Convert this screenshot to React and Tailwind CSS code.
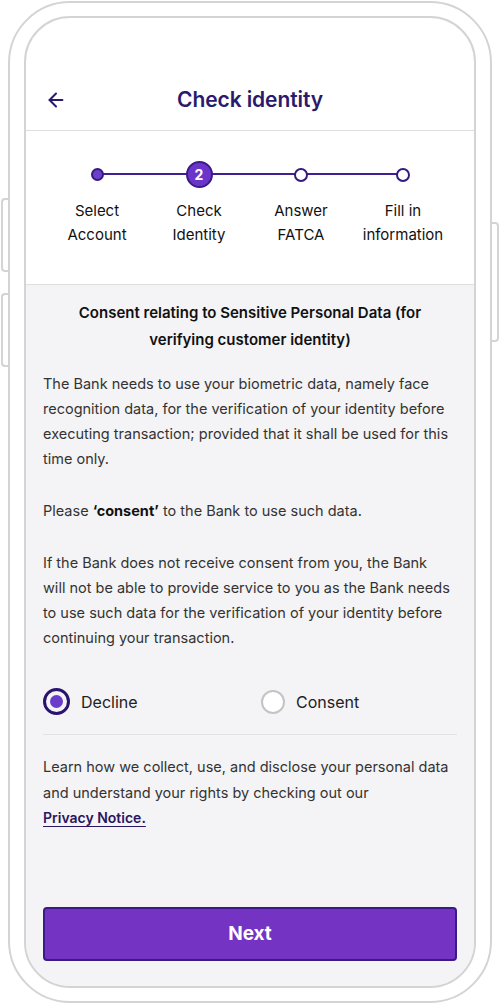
import { ArrowLeft } from 'lucide-react'

const STEPS = [
  { label: ['Select', 'Account'], state: 'done' },
  { label: ['Check', 'Identity'], state: 'current' },
  { label: ['Answer', 'FATCA'], state: 'todo' },
  { label: ['Fill in', 'information'], state: 'todo' },
]

function StepDot({ state }) {
  if (state === 'current') {
    return (
      <div className="w-[27px] h-[27px] rounded-full bg-[#6b35c9] border-2 border-[#3b1a8a] flex items-center justify-center text-white text-[14px] font-bold leading-none">
        2
      </div>
    )
  }
  if (state === 'done') {
    return <div className="w-[13px] h-[13px] rounded-full bg-[#6b3fcb] border-2 border-[#35197f]" />
  }
  return <div className="w-[14px] h-[14px] rounded-full bg-white border-2 border-[#35197f]" />
}

function Stepper() {
  return (
    <div className="relative grid grid-cols-4 px-[20px] pt-[30px] h-[153px]">
      <div className="absolute left-[71px] right-[72px] top-[42px] h-[2px] bg-[#3f1f92]" />
      {STEPS.map((s, i) => (
        <div key={i} className="flex flex-col items-center">
          <div className="relative h-[27px] flex items-center">
            <StepDot state={s.state} />
          </div>
          <div className="mt-[11px] text-center text-[15px] leading-[24px] text-[#111]">
            {s.label[0]}
            <br />
            {s.label[1]}
          </div>
        </div>
      ))}
    </div>
  )
}

function Radio({ checked, label }) {
  return (
    <div className="flex items-center gap-[11px] h-[27px]">
      {checked ? (
        <div className="w-[27px] h-[27px] rounded-full border-[3px] border-[#2a1470] flex items-center justify-center">
          <div className="w-[13px] h-[13px] rounded-full bg-[#6a3ccb]" />
        </div>
      ) : (
        <div className="w-[24px] h-[24px] rounded-full border-2 border-[#c4c4c4] bg-white" />
      )}
      <span className="text-[16px] leading-none text-[#222]">{label}</span>
    </div>
  )
}

export default function App() {
  return (
    <div className="relative w-[500px] h-[1004px] bg-white font-['Inter','Noto_Sans',sans-serif] overflow-hidden">
      {/* side buttons */}
      <div className="absolute left-[1px] top-[198px] w-[9px] h-[74px] border-2 border-r-0 border-[#d4d4d4] rounded-l-[4px]" />
      <div className="absolute left-[1px] top-[293px] w-[9px] h-[74px] border-2 border-r-0 border-[#d4d4d4] rounded-l-[4px]" />
      <div className="absolute right-[1px] top-[222px] w-[9px] h-[120px] border-2 border-l-0 border-[#d4d4d4] rounded-r-[4px]" />

      <div className="relative ml-[8px] mt-[1px] w-[484px] h-[1002px] bg-white border-2 border-[#d4d4d4] rounded-[62px] px-[14px] pt-[13px] pb-[13px]">
        <div className="h-full border-2 border-[#d4d4d4] rounded-[46px] overflow-hidden flex flex-col bg-white">
          {/* header */}
          <div className="relative h-[112px] pt-[52px] flex items-center justify-center">
            <ArrowLeft className="absolute left-[19px] top-[71px] text-[#2b1a6b]" size={22} strokeWidth={2.2} />
            <h1 className="text-[21px] font-semibold text-[#2a1a6b] tracking-[-0.1px]">Check identity</h1>
          </div>
          <div className="h-px bg-[#dedede]" />

          <Stepper />
          <div className="h-px bg-[#dedede]" />

          {/* body */}
          <div className="flex-1 bg-[#f4f3f5] px-[17px] pt-[14px] pb-[25px] flex flex-col">
            <h2 className="text-center text-[15px] font-semibold leading-[27px] text-[#111]">
              Consent relating to Sensitive Personal Data (for
              <br />
              verifying customer identity)
            </h2>

            <div className="mt-[18px] text-[14.5px] leading-[25px] text-[#333] space-y-[27px] whitespace-nowrap">
              <p>
                The Bank needs to use your biometric data, namely face
                <br />
                recognition data, for the verification of your identity before
                <br />
                executing transaction; provided that it shall be used for this
                <br />
                time only.
              </p>
              <p>
                Please <span className="font-bold text-[#111]">‘consent’</span> to the Bank to use such data.
              </p>
              <p>
                If the Bank does not receive consent from you, the Bank
                <br />
                will not be able to provide service to you as the Bank needs
                <br />
                to use such data for the verification of your identity before
                <br />
                continuing your transaction.
              </p>
            </div>

            <div className="mt-[38px] grid grid-cols-2">
              <Radio checked label="Decline" />
              <div className="pl-[11px]">
                <Radio label="Consent" />
              </div>
            </div>

            <div className="mt-[19px] h-px bg-[#e2e1e4]" />

            <p className="mt-[19px] text-[14.5px] leading-[25.5px] text-[#333] whitespace-nowrap">
              Learn how we collect, use, and disclose your personal data
              <br />
              and understand your rights by checking out our
              <br />
              <a className="font-semibold text-[#2a1560] underline underline-offset-[3px] text-[14px]">Privacy Notice.</a>
            </p>

            <button className="mt-auto h-[54px] w-full rounded-[4px] bg-[#7533c3] border-2 border-[#3a1a85] text-white text-[19px] font-bold">
              Next
            </button>
          </div>
        </div>
      </div>
    </div>
  )
}
